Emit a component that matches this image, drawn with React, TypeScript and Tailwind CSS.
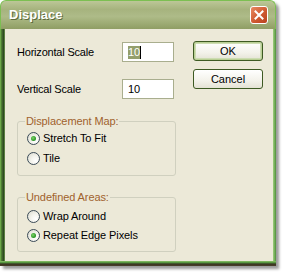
import React from "react";

const font = { fontFamily: '"Liberation Sans", Arial, sans-serif' };

function Radio({ label, checked }: { label: string; checked?: boolean }) {
    return (
        <div className="flex items-center h-[20px] ml-[2px]">
            <div className="relative w-[13px] h-[13px] rounded-full border border-[#3b4b57] bg-[radial-gradient(circle_at_70%_70%,#ffffff_0%,#f4f4ee_40%,#d8d8cc_100%)] flex items-center justify-center">
                {checked && <div className="w-[5px] h-[5px] rounded-full bg-[radial-gradient(circle_at_40%_40%,#7fd46a_0%,#2f9a2a_60%,#1f7a1f_100%)]" />}
            </div>
            <span className="ml-[3px] text-[11px] text-black tracking-[-0.1px]">{label}</span>
        </div>
    );
}

function Group({ title, children, className }: { title: string; children: React.ReactNode; className?: string }) {
    return (
        <fieldset className={`border border-[#d0d0bf] rounded-[3px] px-[7px] pb-[7px] ${className ?? ""}`}>
            <legend className="px-[1px] text-[11px] leading-[13px] text-[#a0622d] tracking-[-0.1px]">{title}</legend>
            {children}
        </fieldset>
    );
}

function XpButton({ children, primary }: { children: React.ReactNode; primary?: boolean }) {
    return (
        <button
            className={`w-[70px] h-[20px] rounded-[3px] border border-[#3d5a22] bg-[linear-gradient(#ffffff,#f3f2ea_60%,#e4e2d4)] text-[11px] text-black flex items-center justify-center ${primary ? "shadow-[inset_0_0_0_1px_#b9cf94,inset_0_0_0_2px_#cddcb2]" : ""}`}
        >
            {children}
        </button>
    );
}

export default function App() {
    return (
        <div className="w-[283px] h-[275px] bg-white overflow-hidden" style={font}>
            <div className="w-[276px] h-[266px] flex flex-col rounded-t-[6px] shadow-[3px_3px_3px_rgba(0,0,0,0.4)]">
                {/* Title bar */}
                <div className="h-[29px] rounded-t-[6px] border-t border-x border-[#7cbf52] bg-[linear-gradient(#bcc797_0%,#a6b37e_30%,#aebb88_55%,#9aa870_85%,#8f9d64_100%)] flex items-center pl-[8px] pr-[7px]">
                    <span className="text-[13px] font-bold text-white [text-shadow:1px_1px_0_#5d6a3c]">Displace</span>
                    <div className="ml-auto w-[18px] h-[18px] rounded-[3px] border border-white bg-[linear-gradient(135deg,#e98a63,#cf5a31_55%,#b8421f)] flex items-center justify-center">
                        <svg width="10" height="10" viewBox="0 0 10 10">
                            <path d="M1.5 1.5 L8.5 8.5 M8.5 1.5 L1.5 8.5" stroke="white" strokeWidth="2" strokeLinecap="square" />
                        </svg>
                    </div>
                </div>

                {/* Body */}
                <div className="flex h-[232px]">
                    <div className="w-[5px] bg-[linear-gradient(90deg,#7cbf52_0%,#4f7d35_30%,#2f4a22_70%,#6f9a50_100%)]" />
                    <div className="w-[268px] bg-[#ece9d8] flex">
                        <div className="w-[171px] pl-[12px] pt-[13px] flex flex-col">
                            <div className="flex items-center h-[20px]">
                                <span className="w-[105px] text-[11px] text-black tracking-[-0.2px]">Horizontal Scale</span>
                                <div className="w-[52px] h-[20px] border border-[#a9ae8e] bg-white flex items-center pl-[5px] text-[11px]">
                                    <span className="bg-[#949f6c] text-white leading-[13px]">10</span>
                                    <span className="w-[1px] h-[13px] bg-black" />
                                </div>
                            </div>
                            <div className="flex items-center h-[20px] mt-[17px]">
                                <span className="w-[105px] text-[11px] text-black tracking-[-0.2px]">Vertical Scale</span>
                                <div className="w-[52px] h-[20px] border border-[#a9ae8e] bg-white flex items-center pl-[5px] text-[11px] text-black">10</div>
                            </div>
                            <Group title="Displacement Map:" className="mt-[16px]">
                                <Radio label="Stretch To Fit" checked />
                                <Radio label="Tile" />
                            </Group>
                            <Group title="Undefined Areas:" className="mt-[15px] pt-[3px] !pb-[6px]">
                                <div className="[&>div]:h-[19px]">
                                    <Radio label="Wrap Around" />
                                    <Radio label="Repeat Edge Pixels" checked />
                                </div>
                            </Group>
                        </div>
                        <div className="pl-[17px] pt-[12px] flex flex-col gap-[8px]">
                            <XpButton primary>OK</XpButton>
                            <XpButton>Cancel</XpButton>
                        </div>
                    </div>
                    <div className="w-[3px] bg-[linear-gradient(90deg,#9fcf7f,#4e8f3a)]" />
                </div>

                {/* Bottom frame */}
                <div className="h-[5px] bg-[linear-gradient(#8fc46b_0%,#4e8f3a_35%,#3a3322_60%,#4a3f2a_100%)]" />
            </div>
        </div>
    );
}
